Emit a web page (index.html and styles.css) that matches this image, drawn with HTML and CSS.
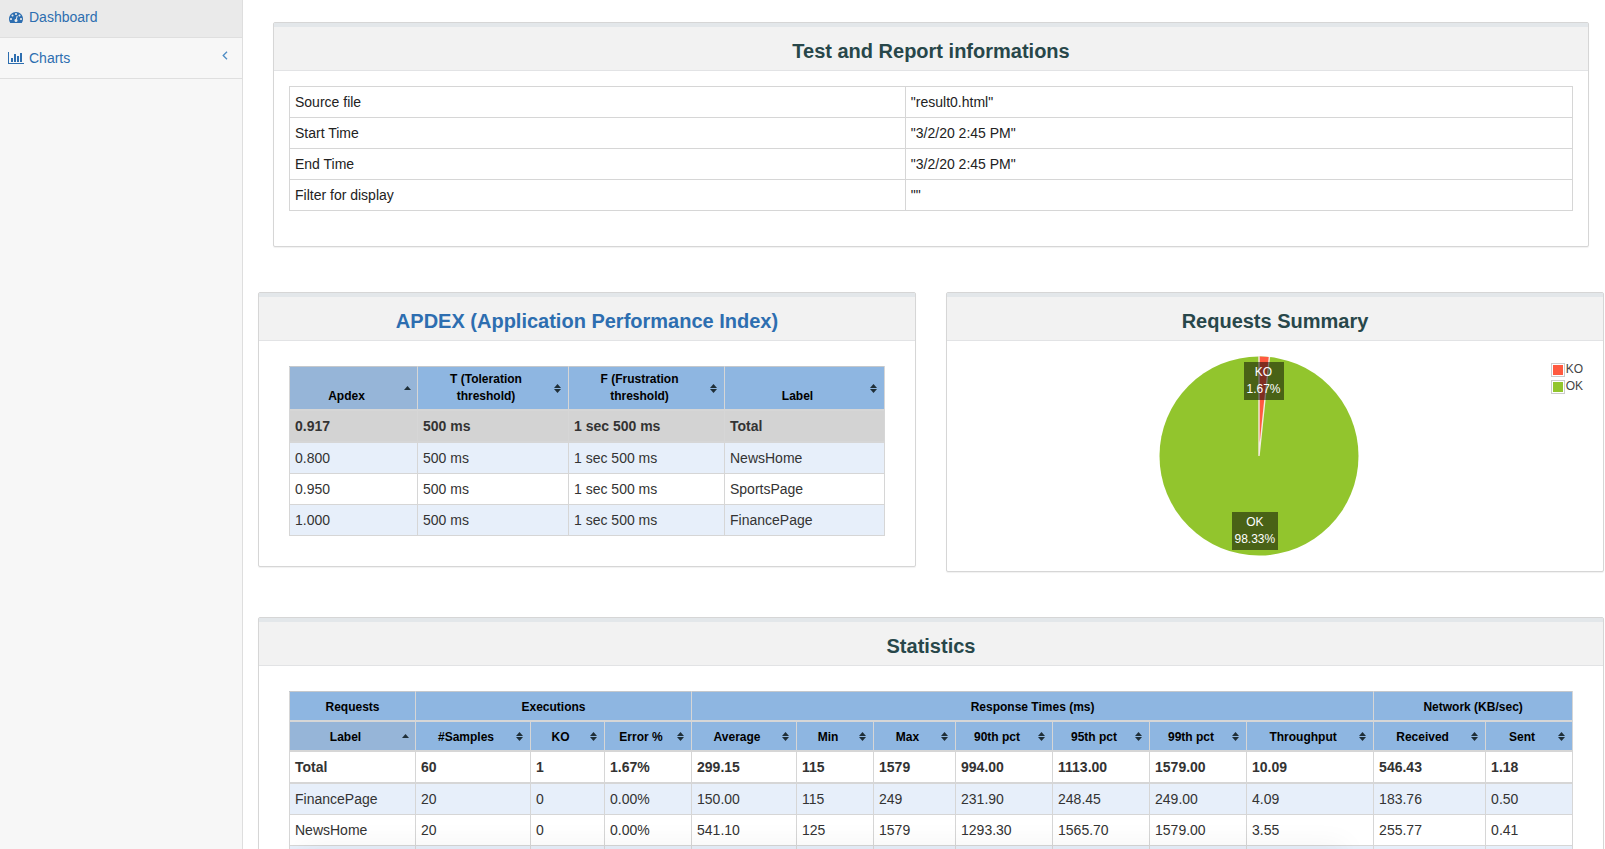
FILE: index.html
```html
<!DOCTYPE html>
<html lang="en">
<head>
<meta charset="utf-8">
<meta name="viewport" content="width=device-width, initial-scale=1">
<title>Dashboard</title>
<link rel="stylesheet" href="styles.css">
</head>
<body>
<svg class="defs" aria-hidden="true">
  <symbol id="sort-both" viewBox="0 0 7 9"><path d="M3.5 0 7 4H0zM3.5 9 0 5h7z"/></symbol>
  <symbol id="sort-asc" viewBox="0 0 7 9"><path d="M3.5 2 7 6H0z"/></symbol>
</svg>
<div class="app">
  <nav class="sidebar">
    <ul class="menu">
      <li class="menu-item"><a class="menu-link active" href="#dashboard">
        <svg class="menu-icon" viewBox="0 0 1792 1792" aria-hidden="true"><path d="M384 1152q0-53-37.5-90.5t-90.5-37.5-90.5 37.5-37.5 90.5 37.5 90.5 90.5 37.5 90.5-37.5 37.5-90.5zm192-448q0-53-37.5-90.5t-90.5-37.5-90.5 37.5-37.5 90.5 37.5 90.5 90.5 37.5 90.5-37.5 37.5-90.5zm428 481l101-382q6-26-7.5-48.5t-38.5-29.5-48 6.5-30 39.5l-101 382q-60 5-107 43.5t-63 98.5q-20 77 20 146t117 89 146-20 89-117q16-60-6-117t-72-91zm660-33q0-53-37.5-90.5t-90.5-37.5-90.5 37.5-37.5 90.5 37.5 90.5 90.5 37.5 90.5-37.5 37.5-90.5zm-640-640q0-53-37.5-90.5t-90.5-37.5-90.5 37.5-37.5 90.5 37.5 90.5 90.5 37.5 90.5-37.5 37.5-90.5zm448 192q0-53-37.5-90.5t-90.5-37.5-90.5 37.5-37.5 90.5 37.5 90.5 90.5 37.5 90.5-37.5 37.5-90.5zm320 448q0 261-141 483-19 29-54 29h-1402q-35 0-54-29-141-221-141-483 0-182 71-348t191-286 286-191 348-71 348 71 286 191 191 286 71 348z"/></svg>
        <span>Dashboard</span></a></li>
      <li class="menu-item"><a class="menu-link" href="#charts">
        <svg class="menu-icon" viewBox="0 0 16 14" aria-hidden="true"><path d="M0 1h1v11h15v1H0zM3 7h2v4H3zM6 3h2v8H6zM9 5h2v6H9zM12 2h2v9h-2z"/></svg>
        <span>Charts</span>
        <svg class="menu-arrow" viewBox="0 0 6 9" aria-hidden="true"><path d="M5 .7 1.200 4.500 5 8.300"/></svg></a></li>
    </ul>
  </nav>

  <main class="content">
    <section class="panel info-panel">
      <h1 class="panel-title">Test and Report informations</h1>
      <div class="info-body">
        <table class="grid info-table">
          <colgroup><col class="info-key"><col></colgroup>
          <tbody>
            <tr><td>Source file</td><td>"result0.html"</td></tr>
            <tr><td>Start Time</td><td>"3/2/20 2:45 PM"</td></tr>
            <tr><td>End Time</td><td>"3/2/20 2:45 PM"</td></tr>
            <tr><td>Filter for display</td><td>""</td></tr>
          </tbody>
        </table>
      </div>
    </section>

    <div class="pair">
      <section class="panel">
        <h2 class="panel-title"><a href="#apdex">APDEX (Application Performance Index)</a></h2>
        <div class="table-body">
          <table class="grid sortable apdex-table">
            <colgroup><col style="width:128px"><col style="width:151px"><col style="width:156px"><col style="width:160px"></colgroup>
            <thead>
              <tr>
                <th class="sorted"><button type="button">Apdex</button><svg class="sort"><use href="#sort-asc"/></svg></th>
                <th><button type="button">T (Toleration threshold)</button><svg class="sort"><use href="#sort-both"/></svg></th>
                <th><button type="button">F (Frustration threshold)</button><svg class="sort"><use href="#sort-both"/></svg></th>
                <th><button type="button">Label</button><svg class="sort"><use href="#sort-both"/></svg></th>
              </tr>
            </thead>
            <tbody>
              <tr class="total shaded"><td>0.917</td><td>500 ms</td><td>1 sec 500 ms</td><td>Total</td></tr>
              <tr class="odd"><td>0.800</td><td>500 ms</td><td>1 sec 500 ms</td><td>NewsHome</td></tr>
              <tr><td>0.950</td><td>500 ms</td><td>1 sec 500 ms</td><td>SportsPage</td></tr>
              <tr class="odd"><td>1.000</td><td>500 ms</td><td>1 sec 500 ms</td><td>FinancePage</td></tr>
            </tbody>
          </table>
        </div>
      </section>

      <section class="panel">
        <h2 class="panel-title">Requests Summary</h2>
        <div class="chart">
          <div class="pie">
            <svg class="pie-svg" viewBox="0 0 200 200" aria-hidden="true">
              <circle cx="100" cy="100" r="99.500" fill="#92c52d"/>
              <path d="M100 100V.5A99.500 99.500 0 0 1 110.400 1Z" fill="#ff5a40"/>
              <path d="M100 0V100L110.400 1" fill="none" stroke="#f4ece0" stroke-width="1.400"/>
            </svg>
            <div class="pie-label ko">KO<br>1.67%</div>
            <div class="pie-label ok">OK<br>98.33%</div>
          </div>
          <ul class="legend">
            <li><span class="swatch swatch-ko"></span>KO</li>
            <li><span class="swatch swatch-ok"></span>OK</li>
          </ul>
        </div>
      </section>
    </div>

    <section class="panel">
      <h2 class="panel-title">Statistics</h2>
      <div class="table-body">
        <table class="grid sortable stats-table">
          <colgroup><col style="width:126px"><col style="width:115px"><col style="width:74px"><col style="width:87px"><col style="width:105px"><col style="width:77px"><col style="width:82px"><col style="width:97px"><col style="width:97px"><col style="width:97px"><col style="width:127px"><col style="width:112px"><col style="width:87px"></colgroup>
          <thead>
            <tr class="groups"><th>Requests</th><th colspan="3">Executions</th><th colspan="7">Response Times (ms)</th><th colspan="2">Network (KB/sec)</th></tr>
            <tr>
              <th class="sorted"><button type="button">Label</button><svg class="sort"><use href="#sort-asc"/></svg></th>
              <th><button type="button">#Samples</button><svg class="sort"><use href="#sort-both"/></svg></th>
              <th><button type="button">KO</button><svg class="sort"><use href="#sort-both"/></svg></th>
              <th><button type="button">Error %</button><svg class="sort"><use href="#sort-both"/></svg></th>
              <th><button type="button">Average</button><svg class="sort"><use href="#sort-both"/></svg></th>
              <th><button type="button">Min</button><svg class="sort"><use href="#sort-both"/></svg></th>
              <th><button type="button">Max</button><svg class="sort"><use href="#sort-both"/></svg></th>
              <th><button type="button">90th pct</button><svg class="sort"><use href="#sort-both"/></svg></th>
              <th><button type="button">95th pct</button><svg class="sort"><use href="#sort-both"/></svg></th>
              <th><button type="button">99th pct</button><svg class="sort"><use href="#sort-both"/></svg></th>
              <th><button type="button">Throughput</button><svg class="sort"><use href="#sort-both"/></svg></th>
              <th><button type="button">Received</button><svg class="sort"><use href="#sort-both"/></svg></th>
              <th><button type="button">Sent</button><svg class="sort"><use href="#sort-both"/></svg></th>
            </tr>
          </thead>
          <tbody>
            <tr class="total"><td>Total</td><td>60</td><td>1</td><td>1.67%</td><td>299.15</td><td>115</td><td>1579</td><td>994.00</td><td>1113.00</td><td>1579.00</td><td>10.09</td><td>546.43</td><td>1.18</td></tr>
            <tr class="odd"><td>FinancePage</td><td>20</td><td>0</td><td>0.00%</td><td>150.00</td><td>115</td><td>249</td><td>231.90</td><td>248.45</td><td>249.00</td><td>4.09</td><td>183.76</td><td>0.50</td></tr>
            <tr><td>NewsHome</td><td>20</td><td>0</td><td>0.00%</td><td>541.10</td><td>125</td><td>1579</td><td>1293.30</td><td>1565.70</td><td>1579.00</td><td>3.55</td><td>255.77</td><td>0.41</td></tr>
            <tr class="odd"><td></td><td></td><td></td><td></td><td></td><td></td><td></td><td></td><td></td><td></td><td></td><td></td><td></td></tr>
          </tbody>
        </table>
      </div>
    </section>
  </main>
</div>
<div class="bottom-shadow"></div>
</body>
</html>
```

FILE: styles.css
```css
* { box-sizing: border-box; }

body {
  margin: 0;
  background: #fff;
  color: #333;
  font: 14px/20px "Liberation Sans", Arial, sans-serif;
}

a { color: #2d6eb0; text-decoration: none; }
ul { margin: 0; padding: 0; list-style: none; }
.defs { position: absolute; width: 0; height: 0; }

.app { display: flex; height: 100vh; overflow: hidden; }

/* Sidebar */
.sidebar { flex: 0 0 243px; background: #f7f7f7; border-right: 1px solid #dedede; }
.menu-item { border-bottom: 1px solid #dfdfdf; }
.menu-link { display: flex; align-items: center; gap: 5px; padding: 10px 14px 10px 8px; }
.menu-link.active { background: #eaeaea; padding-top: 7px; }
.menu-icon { width: 16px; height: 14px; fill: #2d6eb0; }
.menu-arrow { width: 6px; height: 9px; margin: 0 0 6px auto; fill: none; stroke: #4d8cc4; stroke-width: 1.3; }

/* Panels */
.content {
  flex: 1;
  min-width: 0;
  display: flex;
  flex-direction: column;
  gap: 45px;
  padding: 22px 1px 0 15px;
  overflow-y: auto;
  scrollbar-width: none;
}
.panel {
  flex: none;
  min-width: 0;
  border: 1px solid #d6d6d6;
  border-radius: 2px;
  background: #fff;
  box-shadow: 0 1px 1px rgba(0, 0, 0, 0.06);
}
.info-panel { margin: 0 15px; }
.panel-title {
  margin: 0;
  padding: 13px 10px 7px;
  border-top: 4px solid #e3e7ea;
  border-bottom: 1px solid #e2e3e5;
  background: #f2f2f2;
  color: #28474a;
  font-size: 20px;
  font-weight: bold;
  line-height: 23px;
  text-align: center;
}
.pair { flex: none; display: grid; grid-template-columns: 1fr 1fr; gap: 30px; align-items: start; }
.info-body { padding: 15px 15px 35px; }
.table-body { padding: 25px 30px 30px; }

/* Tables */
.grid { width: 100%; border-collapse: collapse; table-layout: fixed; }
.grid td { height: 31px; padding: 5px; border: 1px solid #d6d6d6; text-align: left; }
.info-table { color: #222; }
.info-table td { padding: 5px 6px 5px 5px; }
.info-key { width: 48%; }
.grid th {
  position: relative;
  padding: 4px 5px;
  border: 1px solid #d6d6d6;
  border-top-color: #c4c8cc;
  border-bottom: 2px solid #d6d6d6;
  background: #8eb6e1;
  color: #000;
  font-size: 12px;
  line-height: 17px;
  text-align: center;
  vertical-align: bottom;
}
.grid th.sorted { background: #96b5d8; }
.grid th button {
  display: block;
  width: 100%;
  margin: 0;
  padding: 0 14px 0 0;
  border: 0;
  background: none;
  color: inherit;
  font: inherit;
  text-align: center;
}
.grid.stats-table th { padding: 7px 5px 4px; }
.sort { position: absolute; top: 50%; right: 7px; width: 7px; height: 9px; margin-top: -4px; fill: #1f2f38; }
.sorted .sort { right: 6px; }
.odd td { background: #e7effa; }
.total td { border-bottom-width: 2px; font-weight: bold; }
.shaded td { background: #d3d3d3; }

/* Pie chart */
.chart { position: relative; display: flex; justify-content: center; padding: 15px 48px 15px 15px; }
.pie { position: relative; width: 200px; height: 200px; }
.pie-svg { display: block; width: 100%; height: 100%; }
.pie-label {
  position: absolute;
  padding: 2px 3px;
  background: rgba(0, 0, 0, 0.5);
  color: #fff;
  font-size: 12px;
  line-height: 17px;
  text-align: center;
}
.pie-label.ko { top: 6px; left: 85px; }
.pie-label.ok { bottom: 6px; left: 73px; }
.legend { position: absolute; top: 20px; right: 20px; font-size: 12px; line-height: 17px; color: #444; }
.legend li { display: flex; align-items: center; gap: 1px; }
.swatch { width: 14px; height: 14px; padding: 1px; border: 1px solid #ccc; background-clip: content-box; }
.swatch-ko { background-color: #ff5a40; }
.swatch-ok { background-color: #92c52d; }

/* Soft shade along the window's lower edge */
.bottom-shadow {
  position: fixed;
  top: 100%;
  left: 300px;
  right: 260px;
  height: 10px;
  box-shadow: 0 0 28px rgba(0, 0, 0, 0.1);
  pointer-events: none;
}
```
